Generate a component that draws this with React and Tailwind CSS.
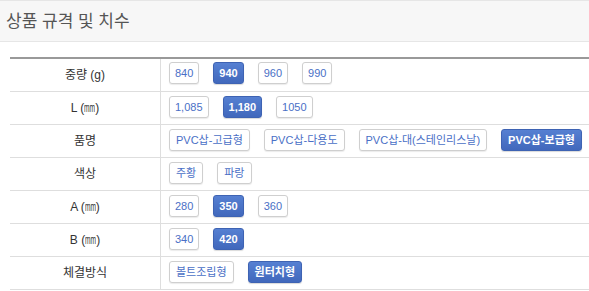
import React from "react";

// Squared "mm" unit sign, drawn as condensed letters
const MM = () => (
  <span className="inline-block w-[11px] text-left align-baseline">
    <span className="inline-block origin-left scale-x-[0.55]">mm</span>
  </span>
);

const rows = [
  { key: "w", label: "중량 (g)", options: ["840", "940", "960", "990"], active: "940" },
  { key: "l", label: <>L (<MM />)</>, options: ["1,085", "1,180", "1050"], active: "1,180" },
  {
    key: "n",
    label: "품명",
    options: ["PVC삽-고급형", "PVC삽-다용도", "PVC삽-대(스테인리스날)", "PVC삽-보급형"],
    active: "PVC삽-보급형",
  },
  { key: "c", label: "색상", options: ["주황", "파랑"], active: null },
  { key: "a", label: <>A (<MM />)</>, options: ["280", "350", "360"], active: "350" },
  { key: "b", label: <>B (<MM />)</>, options: ["340", "420"], active: "420" },
  { key: "f", label: "체결방식", options: ["볼트조립형", "원터치형"], active: "원터치형" },
];

function OptionButton({ text, active }) {
  const numeric = /^[\d,]+$/.test(text);
  const pad = numeric ? "px-[5px]" : "px-[6px]";
  if (active) {
    return (
      <span
        className={`inline-flex h-[22px] shrink-0 items-center whitespace-nowrap rounded-[3px] border border-[#3e63b3] bg-gradient-to-b from-[#5680d2] to-[#4168bc] ${pad} text-[11px] font-bold leading-none text-white shadow-[0_1px_1px_rgba(0,0,0,0.15)]`}
      >
        {text}
      </span>
    );
  }
  return (
    <span
      className={`inline-flex h-[22px] shrink-0 items-center whitespace-nowrap rounded-[3px] border border-[#cfcfcf] bg-white ${pad} text-[11px] leading-none text-[#4a6fc6] shadow-[0_1px_1px_rgba(0,0,0,0.08)]`}
    >
      {text}
    </span>
  );
}

export default function App() {
  return (
    <div
      className="h-[291px] w-[589px] overflow-hidden bg-white"
      style={{ fontFamily: "'Liberation Sans', 'Noto Sans CJK KR', sans-serif" }}
    >
      <div className="flex h-[42px] items-center border-y border-[#e6e6e6] bg-[#f7f7f7] pl-[6px]">
        <h2 className="text-[17px] font-normal leading-none text-[#555]">상품 규격 및 치수</h2>
      </div>

      <div className="ml-[10px] mt-[15px] border-t-2 border-[#999]">
        {rows.map((row, i) => (
          <div key={row.key} className="flex h-[33px] border-b border-[#dedede]">
            <div className="flex w-[151px] shrink-0 items-center justify-center whitespace-nowrap border-r border-[#dedede] text-[12px] text-[#333]">
              {row.label}
            </div>
            <div
              className={`flex min-w-0 flex-1 items-start gap-[14px] overflow-hidden pl-[8px] ${
                i === 0 ? "pt-[3px]" : "pt-[4px]"
              }`}
            >
              {row.options.map((opt) => (
                <OptionButton key={opt} text={opt} active={opt === row.active} />
              ))}
            </div>
          </div>
        ))}
      </div>
    </div>
  );
}
